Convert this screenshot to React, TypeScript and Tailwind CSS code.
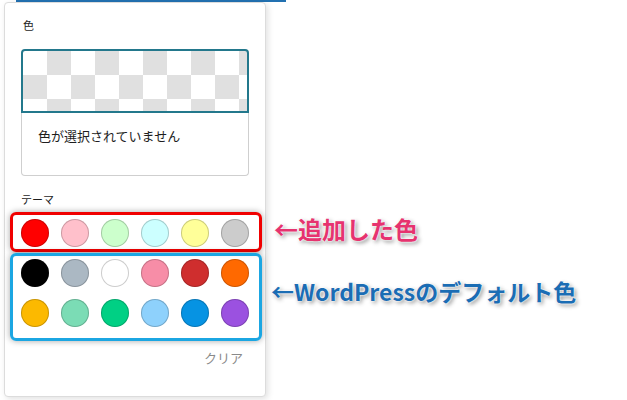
const themeColors = ["#ff0000", "#ffc0cb", "#ccffcc", "#ccffff", "#ffff99", "#cccccc"]

const defaultColors = [
  "#000000",
  "#abb8c3",
  "#ffffff",
  "#f78da7",
  "#cf2e2e",
  "#ff6900",
  "#fcb900",
  "#7bdcb5",
  "#00d084",
  "#8ed1fc",
  "#0693e3",
  "#9b51e0",
]

function Swatch({ color }: { color: string }) {
  return (
    <button
      type="button"
      aria-label={color}
      className="h-[28px] w-[28px] rounded-full shadow-[inset_0_0_0_1px_rgba(0,0,0,0.2)]"
      style={{ backgroundColor: color }}
    />
  )
}

function ColorPanel() {
  return (
    <div className="flex w-[266px] shrink-0 flex-col">
      {/* underline of the toolbar button behind the popover */}
      <div className="ml-[16px] h-[2px] w-[270px] shrink-0 bg-[#2271b1]" />
      <div className="ml-[4px] h-[395px] w-[262px] rounded-[4px] border border-[#dcdcdc] bg-white px-[16px] pt-[14px] shadow-[2px_2px_6px_rgba(0,0,0,0.12)]">
        <div className="ml-[2px] text-[11px] leading-[16px] text-[#1e1e1e]">色</div>

        <div className="mt-[16px] flex flex-col">
          <div className="h-[64px] rounded-t-[4px] border-2 border-[#23788c] bg-[repeating-conic-gradient(#e0e0e0_0%_25%,#ffffff_0%_50%)] bg-[length:48px_48px]" />
          <div className="h-[63px] rounded-b-[4px] border-x border-b border-[#cfcfcf] px-[16px] pt-[13px] text-[13px] leading-[20px] text-[#1e1e1e]">
            色が選択されていません
          </div>
        </div>

        <div className="mt-[15px] text-[11px] leading-[16px] text-[#1e1e1e]">テーマ</div>

        <div className="relative mt-[12px]">
          <div className="grid grid-cols-6 gap-x-[12px] gap-y-[12px]">
            {themeColors.map((c) => (
              <Swatch key={c} color={c} />
            ))}
            {defaultColors.map((c) => (
              <Swatch key={c} color={c} />
            ))}
          </div>
          {/* callout frames */}
          <div className="pointer-events-none absolute left-[-11px] top-[-7px] h-[40px] w-[252px] rounded-[6px] border-[3px] border-[#f00000] shadow-[0_0_6px_rgba(0,0,0,0.35)]" />
          <div className="pointer-events-none absolute left-[-11px] top-[34px] h-[88px] w-[252px] rounded-[6px] border-[3px] border-[#1ba6e2] shadow-[0_0_6px_rgba(0,0,0,0.35)]" />
        </div>

        <div className="mt-[21px] flex justify-end pr-[6px]">
          <span className="text-[13px] leading-[20px] text-[#8a8a8a]">クリア</span>
        </div>
      </div>
    </div>
  )
}

export default function App() {
  return (
    <div className="flex h-[400px] w-[627px] overflow-hidden bg-white font-['Noto_Sans_CJK_JP','Noto_Sans',sans-serif]">
      <ColorPanel />
      <div className="flex flex-col items-start pt-[214px]">
        <div className="ml-[8px] text-[24px] font-bold leading-[30px] text-[#e6336f] [text-shadow:0_0_2px_#fff,0_0_2px_#fff,2px_2px_4px_rgba(0,0,0,0.45)]">
          ←追加した色
        </div>
        <div className="ml-[5px] mt-[32px] text-[23px] font-bold leading-[30px] text-[#1b6db4] [text-shadow:0_0_2px_#fff,0_0_2px_#fff,2px_2px_4px_rgba(0,0,0,0.45)]">
          ←WordPressのデフォルト色
        </div>
      </div>
    </div>
  )
}
